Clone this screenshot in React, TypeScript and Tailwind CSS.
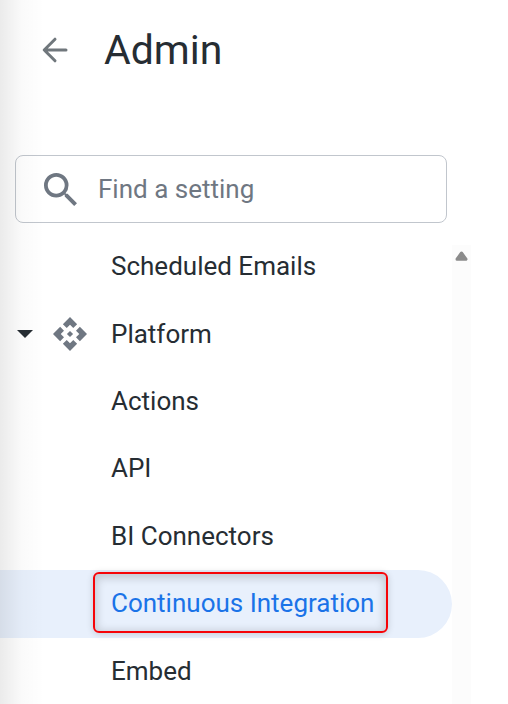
import React from 'react';

interface SettingItem {
  id: string;
  label: string;
}

const platformItems: SettingItem[] = [
  { id: 'actions', label: 'Actions' },
  { id: 'api', label: 'API' },
  { id: 'bi-connectors', label: 'BI Connectors' },
  { id: 'continuous-integration', label: 'Continuous Integration' },
  { id: 'embed', label: 'Embed' },
];

const BackIcon = () => (
  <svg viewBox="0 0 26 26" className="h-[26px] w-[26px]" fill="none" stroke="#70777c" strokeWidth="3" strokeLinecap="round" strokeLinejoin="round" aria-hidden="true">
    <path d="M24 13H2.4M13 2.2L2.2 13L13 23.8" />
  </svg>
);

const SearchIcon = () => (
  <svg viewBox="3 3 17.5 17.5" className="h-[33px] w-[33px] shrink-0" fill="#6f7782" aria-hidden="true">
    <path d="M15.5 14h-.79l-.28-.27A6.47 6.47 0 0 0 16 9.5 6.5 6.5 0 1 0 9.5 16c1.61 0 3.09-.59 4.23-1.57l.27.28v.79l5 4.99L20.49 19l-4.99-5zm-6 0C7.01 14 5 11.99 5 9.5S7.01 5 9.5 5 14 7.01 14 9.5 11.99 14 9.5 14z" />
  </svg>
);

const PlatformIcon = () => (
  <svg viewBox="1 1 22 22" className="h-[34px] w-[34px] shrink-0" fill="#6f7782" aria-hidden="true">
    <path d="M14 12l-2 2-2-2 2-2 2 2zm-2-6l2.12 2.12 2.5-2.5L12 1 7.38 5.62l2.5 2.5L12 6zm-6 6l2.12-2.12-2.5-2.5L1 12l4.62 4.62 2.5-2.5L6 12zm12 0l-2.12 2.12 2.5 2.5L23 12l-4.62-4.62-2.5 2.5L18 12zm-6 6l-2.12-2.12-2.5 2.5L12 23l4.62-4.62-2.5-2.5L12 18z" />
  </svg>
);

const SettingLink: React.FC<{ item: SettingItem; active?: boolean }> = ({ item, active }) => (
  <li className="flex">
    <a
      href={`#${item.id}`}
      aria-current={active ? 'page' : undefined}
      className={
        active
          ? 'relative flex flex-1 items-center rounded-r-full bg-[#e8f0fc] pb-px pl-[111px] text-[#1a73e8]'
          : 'flex flex-1 items-center pb-px pl-[111px]'
      }
    >
      {active && (
        <span className="absolute top-[2px] bottom-[5px] left-[93px] w-[295px] rounded-md border-2 border-[#f60408] shadow-[0_1px_7px_rgba(0,0,0,0.16),inset_0_2px_9px_2px_rgba(0,0,0,0.17)]" />
      )}
      {item.label}
    </a>
  </li>
);

export default function App() {
  return (
    <div className="relative flex h-screen flex-col overflow-hidden bg-white font-['Roboto',sans-serif] text-[26px] leading-8 text-[#262d33]">
      <header className="flex h-[100px] shrink-0 items-center gap-9 pl-[42px]">
        <button type="button" aria-label="Back">
          <BackIcon />
        </button>
        <h1 className="text-[41px] leading-[48px]">Admin</h1>
      </header>

      <label className="mt-[55px] mr-[61px] ml-[15px] flex h-[68px] shrink-0 items-center gap-[21px] rounded-lg border border-[#c1c6cd] pr-4 pl-7">
        <SearchIcon />
        <input
          type="search"
          aria-label="Find a setting"
          placeholder="Find a setting"
          className="min-w-0 flex-1 bg-transparent outline-none placeholder:text-[#6f7782]"
        />
      </label>

      <div className="mt-[22px] mr-[37px] flex min-h-0 flex-1">
        <nav className="flex-1" aria-label="Admin settings">
          <ul className="-mt-3 grid min-h-[472px] auto-rows-fr">
            <SettingLink item={{ id: 'scheduled-emails', label: 'Scheduled Emails' }} />
            <li className="flex">
              <button type="button" aria-expanded="true" className="flex flex-1 items-center pb-px pl-[17px] text-left">
                <svg viewBox="0 0 16 8" className="h-2 w-4" fill="#262d33" aria-hidden="true">
                  <path d="M0 0H16L8 8Z" />
                </svg>
                <span className="mr-6 ml-5">
                  <PlatformIcon />
                </span>
                Platform
              </button>
            </li>
            {platformItems.map((item) => (
              <SettingLink key={item.id} item={item} active={item.id === 'continuous-integration'} />
            ))}
          </ul>
        </nav>
        <div className="flex w-[19px] justify-center bg-[#fcfcfc] pt-1.5">
          <svg viewBox="0 0 13 10" className="h-[10px] w-[13px]" fill="#8b8b8b" stroke="#8b8b8b" strokeWidth="3" strokeLinejoin="round" aria-hidden="true">
            <path d="M6.5 2L11 8.2H2Z" />
          </svg>
        </div>
      </div>

      <div className="pointer-events-none absolute inset-y-0 left-0 w-11 bg-linear-to-r from-black/8 via-black/2 to-transparent" />
    </div>
  );
}
